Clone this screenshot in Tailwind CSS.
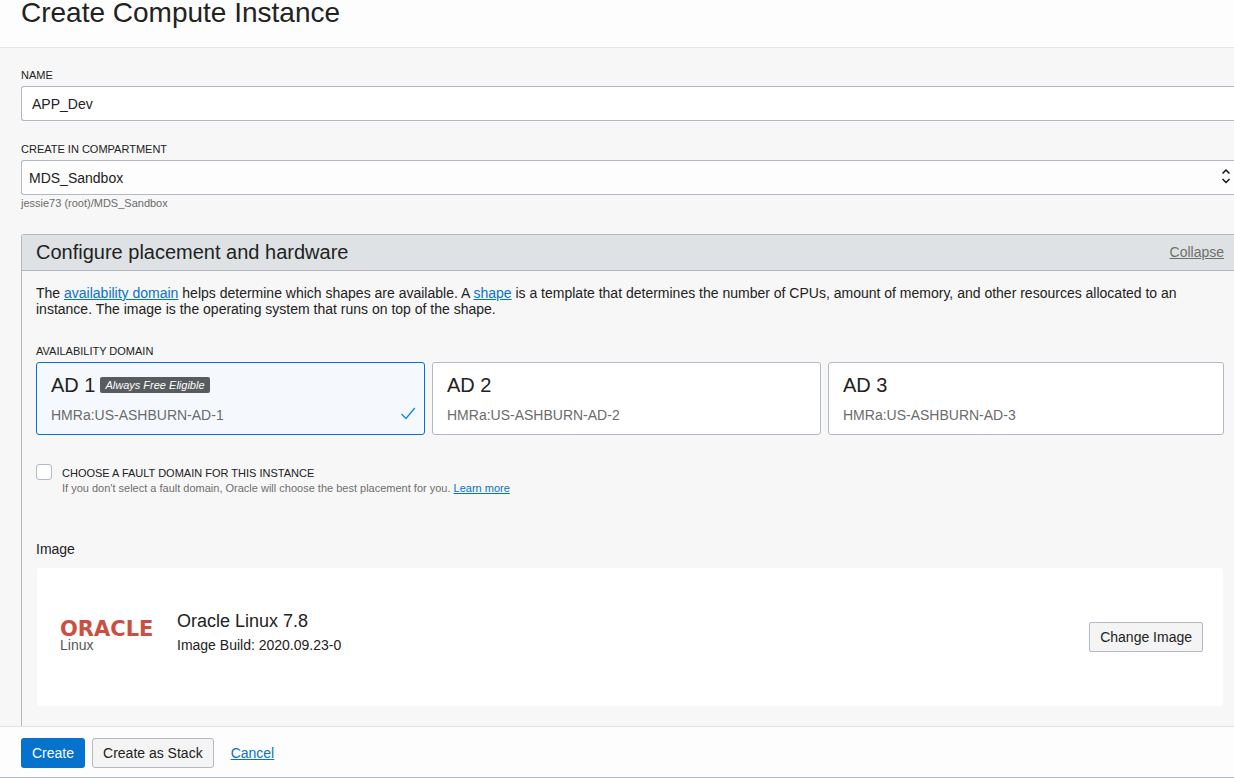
<!DOCTYPE html>
<html lang="en">
<head>
<meta charset="utf-8">
<meta name="viewport" content="width=device-width, initial-scale=1">
<title>Create Compute Instance</title>
<script src="https://cdn.jsdelivr.net/npm/@tailwindcss/browser@4"></script>
</head>
<body class="flex min-h-screen flex-col bg-[#f7f7f7] font-['Liberation_Sans',Arial,sans-serif] text-sm leading-4 text-[#222222]">
  <header class="border-b border-[#e2e4e5] bg-[#fdfdfd] px-[21px] pt-px pb-[22px]">
    <h1 class="text-[28px] leading-6">Create Compute Instance</h1>
  </header>

  <main class="flex flex-1 flex-col pt-[19px] pl-[21px]">
    <label for="name" class="text-[11px] leading-4">NAME</label>
    <input id="name" type="text" value="APP_Dev" class="mt-[3px] h-[35px] w-full rounded-l-[3px] border border-r-0 border-[#b2b9c4] bg-white px-[10px] text-sm">

    <label for="compartment" class="mt-5 text-[11px] leading-4">CREATE IN COMPARTMENT</label>
    <div class="relative mt-[3px]">
      <select id="compartment" class="h-[35px] w-full appearance-none rounded-l-[3px] border border-r-0 border-[#b2b9c4] bg-[#fdfdfd] px-[7px] text-sm">
        <option>MDS_Sandbox</option>
      </select>
      <svg class="pointer-events-none absolute top-2 right-1 h-4 w-2" viewBox="0 0 8 16" fill="none" stroke="#111111" stroke-width="1.5" aria-hidden="true">
        <path d="M0.5 5.5 4 2l3.500 3.500M0.500 11 4 14.500l3.500-3.500"/>
      </svg>
    </div>
    <p class="text-[11px] leading-4 text-[#6b6b6b]">jessie73 (root)/MDS_Sandbox</p>

    <section class="mt-[23px] flex-1 rounded-tl-[3px] border-t border-l border-[#b2b9c4]">
      <div class="flex items-start justify-between border-b border-[#b2b9c4] bg-[#dfe2e5] py-[5px] pr-[10px] pl-[14px]">
        <h2 class="text-xl leading-[25px]">Configure placement and hardware</h2>
        <a href="#" class="leading-6 text-[#6f6f6a] underline">Collapse</a>
      </div>

      <div class="flex flex-col pt-[14px] pr-[10px] pb-5 pl-[14px]">
        <p>The <a href="#" class="text-[#0572ce] underline">availability domain</a> helps determine which shapes are available. A <a href="#" class="text-[#0572ce] underline">shape</a> is a template that determines the number of CPUs, amount of memory, and other resources allocated to an instance. The image is the operating system that runs on top of the shape.</p>

        <h3 class="mt-[26px] text-[11px] leading-4">AVAILABILITY DOMAIN</h3>
        <div class="mt-[3px] grid grid-cols-3">
          <div class="pr-[7px]">
            <button type="button" aria-pressed="true" class="flex h-[73px] w-full items-end justify-between rounded-[3px] border border-[#0572ce] bg-[#f5f9fe] pr-2 pb-[11px] pl-[14px] text-left">
              <span class="flex flex-col gap-[10px]">
                <span class="flex items-center gap-[5px] text-xl leading-6">AD 1 <em class="rounded-[2px] bg-[#585c5f] px-[5px] text-[11px] leading-4 font-normal text-white">Always Free Eligible</em></span>
                <span class="text-[#6b6b6b]">HMRa:US-ASHBURN-AD-1</span>
              </span>
              <svg class="h-4 w-4" viewBox="0 0 16 16" fill="none" stroke="#1f80d3" stroke-width="1.3" aria-hidden="true"><path d="M1.500 7 6 11.500 14.800 1"/></svg>
            </button>
          </div>
          <div class="pr-[7px]">
            <button type="button" class="flex h-[73px] w-full flex-col justify-end gap-[10px] rounded-[3px] border border-[#b2b9c4] bg-white px-[14px] pb-[11px] text-left">
              <span class="text-xl leading-6">AD 2</span>
              <span class="text-[#6b6b6b]">HMRa:US-ASHBURN-AD-2</span>
            </button>
          </div>
          <div>
            <button type="button" class="flex h-[73px] w-full flex-col justify-end gap-[10px] rounded-[3px] border border-[#b2b9c4] bg-white px-[14px] pb-[11px] text-left">
              <span class="text-xl leading-6">AD 3</span>
              <span class="text-[#6b6b6b]">HMRa:US-ASHBURN-AD-3</span>
            </button>
          </div>
        </div>

        <div class="mt-[29px] flex gap-[10px]">
          <input id="fault" type="checkbox" class="h-4 w-4 appearance-none rounded-[3px] border border-[#b2b9c4] bg-white checked:bg-[#0572ce]">
          <div class="pt-px text-[11px]">
            <label for="fault" class="block leading-4">CHOOSE A FAULT DOMAIN FOR THIS INSTANCE</label>
            <p class="leading-[14px] text-[#6f6f6f]">If you don't select a fault domain, Oracle will choose the best placement for you. <a href="#" class="text-[#0572ce] underline">Learn more</a></p>
          </div>
        </div>

        <h3 class="mt-[46px]">Image</h3>
        <div class="mx-px mt-[11px] flex h-[138px] items-center rounded-[3px] bg-white pr-5 pl-[23px]">
          <div class="w-[117px]">
            <div class="font-['DejaVu_Sans',sans-serif] text-[21px] leading-4 font-bold text-[#cb4f40]">ORACLE</div>
            <div class="leading-4 text-[#555555]">Linux</div>
          </div>
          <div class="flex flex-1 flex-col pb-3">
            <div class="text-lg leading-7">Oracle Linux 7.8</div>
            <div class="leading-5">Image Build: 2020.09.23-0</div>
          </div>
          <button type="button" class="h-[30px] rounded-[2px] border border-[#b2b9c4] bg-[#f4f4f4] px-[10px]">Change Image</button>
        </div>
      </div>
    </section>
  </main>

  <footer class="sticky bottom-0 flex items-center border-t border-b border-t-[#e2e4e5] border-b-[#b2b9c4] bg-[#fdfdfd] px-[21px] pt-[11px] pb-[9px]">
    <button type="submit" class="h-[30px] rounded-[3px] bg-[#0572ce] px-[11px] text-white">Create</button>
    <button type="button" class="ml-[7px] h-[30px] rounded-[3px] border border-[#b2b9c4] bg-[#f4f4f4] px-[10px]">Create as Stack</button>
    <a href="#" class="ml-[17px] text-[#0572ce] underline">Cancel</a>
  </footer>
</body>
</html>
